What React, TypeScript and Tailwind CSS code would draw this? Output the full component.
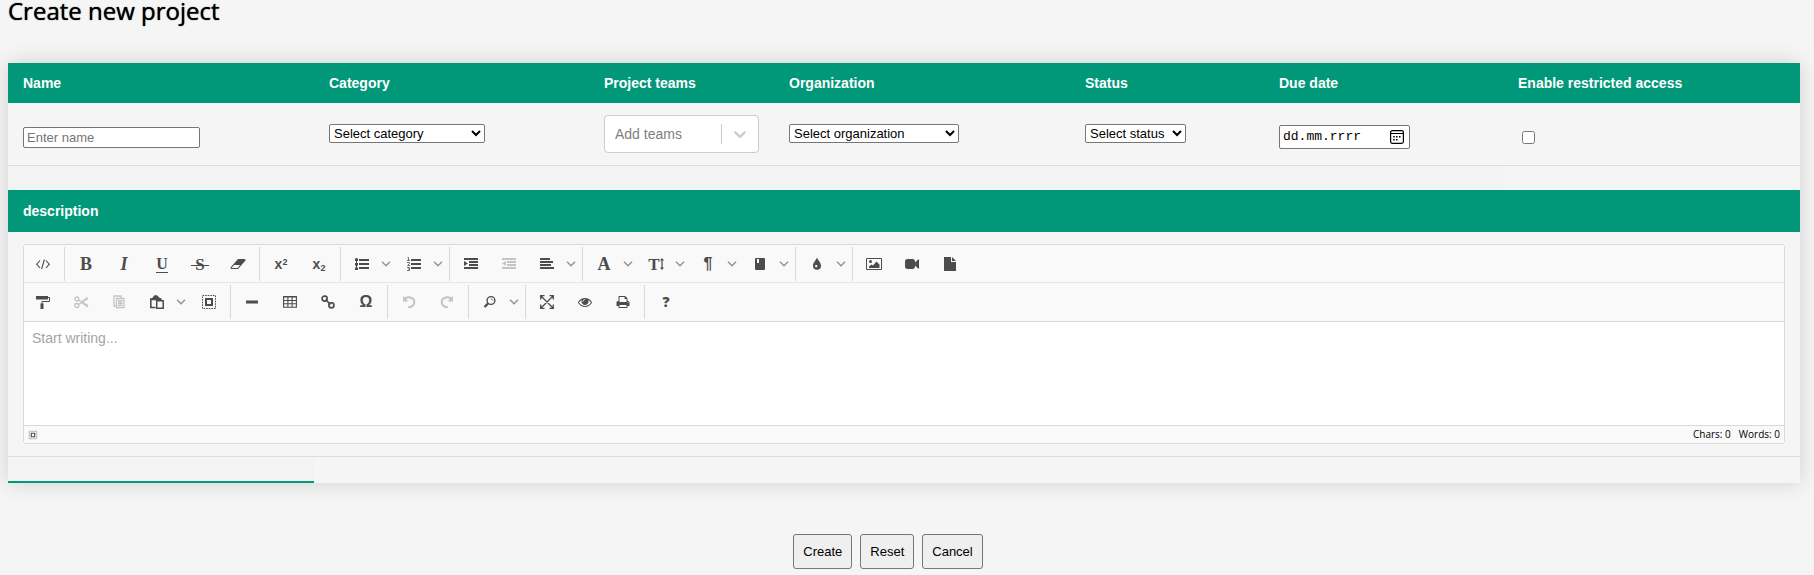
import React from "react";

type IconName =
  | "source" | "eraser" | "ul" | "ol" | "indent" | "outdent" | "align" | "book" | "drop"
  | "image" | "video" | "file" | "brush" | "cut" | "copy" | "paste" | "selectall" | "hr"
  | "table" | "link" | "undo" | "redo" | "search" | "fullsize" | "eye" | "print";

const shapes: Record<IconName, React.ReactNode> = {
  source: (
    <path d="M4 3.5L.7 7.2L4 11M10 3.5l3.300 3.700L10 11M8.400 2.500L5.600 12" fill="none" stroke="currentColor" strokeWidth="1.100" />
  ),
  eraser: (
    <g transform="scale(0.0078125)">
      <path d="M832 1408l336-384h-768l-336 384h768zm1013-1077q15 34 9.5 71.500t-30.500 65.500l-896 1024q-38 44-96 44h-768q-38 0-69.500-20.500t-47.500-54.500q-15-34-9.500-71.500t30.500-65.500l896-1024q38-44 96-44h768q38 0 69.500 20.500t47.500 54.500z" />
    </g>
  ),
  ul: (
    <path d="M0 1.500h3v2.500H0zM0 6h3v2.500H0zM0 10.500h3V13H0zM4 2h10v2H4zM4 6h10v2H4zM4 10h10v2H4zM1 1h1v12H1z" />
  ),
  ol: (
    <>
      <path d="M4 2h10v2H4zM4 6h10v2H4zM4 10h10v2H4z" />
      <path d="M.5.5h1v3M0 3.500h3M0 5.500h2.500v1L.5 8.500H3M0 10.500h2.500v3H0M1 12h1.500" fill="none" stroke="currentColor" strokeWidth=".8" />
    </>
  ),
  indent: <path d="M0 1h14v2H0zM5 4h9v2H5zM5 7h9v2H5zM0 10h14v2H0zM0 4l4 2.500L0 9z" />,
  outdent: <path d="M0 1h14v2H0zM5 4h9v2H5zM5 7h9v2H5zM0 10h14v2H0zM4 4L0 6.500L4 9z" />,
  align: <path d="M0 1h10v2H0zM0 4h13v2H0zM0 7h11v2H0zM0 10h14v2H0z" />,
  book: <path fillRule="evenodd" d="M3 1h8a1 1 0 0 1 1 1v10a1 1 0 0 1-1 1H3a1 1 0 0 1-1-1V2a1 1 0 0 1 1-1zM4 2v4h2V2z" />,
  drop: <path fillRule="evenodd" d="M7 .5c1 3 4 5 4 8.300a4 4 0 0 1-8 0C3 5.500 6 3.500 7 .5zM5.200 8v2.200h2V8z" />,
  image: (
    <>
      <path d="M-.5 1.500h15v11h-15z" fill="none" stroke="currentColor" strokeWidth="1" />
      <circle cx="3.500" cy="4.500" r="1.500" />
      <path d="M2 11V9.500L4.500 7.500L6 8.500L9.500 4.500L12.500 7.500V11z" />
    </>
  ),
  video: (
    <g transform="scale(0.0078125)">
      <path d="M1792 352v1088q0 42-39 59-13 5-25 5-27 0-45-19l-403-403v166q0 119-84.500 203.500t-203.500 84.500h-704q-119 0-203.500-84.500t-84.500-203.500v-704q0-119 84.500-203.500t203.500-84.500h704q119 0 203.500 84.500t84.500 203.500v165l403-402q18-19 45-19 12 0 25 5 39 17 39 59z" />
    </g>
  ),
  file: <path d="M1 0h7v5h5v9H1zM9 0l4 4H9z" />,
  brush: (
    <>
      <path d="M0 1h12v3.500H0z" />
      <path d="M12 2.500h1.500v4H6V9" fill="none" stroke="currentColor" />
      <path d="M4.500 8.500h3V14h-3z" />
    </>
  ),
  cut: (
    <g fill="none" stroke="currentColor" strokeWidth="1.300">
      <circle cx="2.800" cy="4" r="2" />
      <circle cx="2.800" cy="10.500" r="2" />
      <path d="M4.500 5l9.500 5.500M4.500 9.500L14 3.500M7 7l7 5M7 7.500L13.500 2.500" />
    </g>
  ),
  copy: (
    <>
      <path d="M4 11H2V1h7v2" fill="none" stroke="currentColor" strokeWidth="1.300" />
      <path d="M4.500 3.500h7.500v9H4.500z" fill="none" stroke="currentColor" strokeWidth="1.300" />
      <path d="M6 5h4.500v1.700H6zM6 7.200h4.500v1.700H6zM6 9.400h4.500V11H6z" />
    </>
  ),
  paste: (
    <>
      <path d="M5.500 12.500H.8V4h10V5" fill="none" stroke="currentColor" strokeWidth="1.600" />
      <path d="M1 4.500L4.500.3h2.500L10.800 4v1.200H1z" />
      <path d="M6.700 5.700h6.500v7.600H6.700z" fill="none" stroke="currentColor" strokeWidth="1.500" />
    </>
  ),
  selectall: (
    <>
      <path d="M.5.5h13v13H.5z" fill="none" stroke="currentColor" strokeDasharray="1.600 1" />
      <path d="M4 4h6v6H4z" fill="none" stroke="currentColor" strokeWidth="2" />
    </>
  ),
  hr: <path d="M1 5.500h12v3H1z" />,
  table: (
    <path d="M.6 1.500h12.800v10.700H.6zM1 2h12M.6 5.500h12.800M.6 8.800h12.800M4.900 1.500v10.700M9.100 1.500v10.700" fill="none" stroke="currentColor" strokeWidth="1.100" />
  ),
  link: (
    <g fill="none" stroke="currentColor" strokeWidth="1.700">
      <rect x="1.100" y="1.100" width="5" height="5" rx="2.300" />
      <rect x="7.900" y="7.900" width="5" height="5" rx="2.300" />
      <path d="M4.500 4.500l5 5" />
    </g>
  ),
  undo: (
    <>
      <path d="M2 4.200C5 .8 12.300 1.800 12.300 7.200c0 3.600-3.300 5.300-6.300 4.800" fill="none" stroke="currentColor" strokeWidth="2" />
      <path d="M1 1v5.500h5.500z" />
    </>
  ),
  redo: (
    <>
      <path d="M12 4.200C9 .8 1.700 1.800 1.700 7.200c0 3.600 3.300 5.300 6.300 4.800" fill="none" stroke="currentColor" strokeWidth="2" />
      <path d="M13 1v5.500H7.500z" />
    </>
  ),
  search: (
    <>
      <circle cx="8" cy="5.500" r="3.900" fill="none" stroke="currentColor" strokeWidth="1.400" />
      <path d="M5 8.500L1.500 12" stroke="currentColor" strokeWidth="2.400" />
      <path d="M8 3.500l2 2" stroke="currentColor" strokeWidth="1" />
    </>
  ),
  fullsize: (
    <path d="M.7 4.500V.7h3.800M9.500.7h3.800v3.800M13.300 9.500v3.800H9.500M4.500 13.300H.7V9.500M1 1l12 12M13 1L1 13" fill="none" stroke="currentColor" strokeWidth="1.300" />
  ),
  eye: (
    <g transform="scale(0.0078125)">
      <path d="M1664 960q-152-236-381-353 61 104 61 225 0 185-131.500 316.500t-316.500 131.500-316.500-131.500-131.500-316.500q0-121 61-225-229 117-381 353 133 205 333.500 326.500t434.500 121.500 434.500-121.500 333.500-326.500zm-720-384q0-20-14-34t-34-14q-125 0-214.500 89.500t-89.500 214.500q0 20 14 34t34 14 34-14 14-34q0-86 61-147t147-61q20 0 34-14t14-34zm848 384q0 34-20 69-140 230-376.500 368.500t-499.500 138.500-499.500-139-376.500-368q-20-35-20-69t20-69q140-229 376.500-368t499.500-139 499.500 139 376.500 368q20 35 20 69z" />
    </g>
  ),
  print: (
    <g transform="scale(0.0078125)">
      <path d="M448 1536h896v-256h-896v256zm0-640h896v-384h-160q-40 0-68-28t-28-68v-160h-640v640zm1152 64q0-26-19-45t-45-19-45 19-19 45 19 45 45 19 45-19 19-45zm128 0v416q0 13-9.500 22.500t-22.500 9.500h-224v160q0 40-28 68t-68 28h-960q-40 0-68-28t-28-68v-160h-224q-13 0-22.500-9.500t-9.500-22.500v-416q0-79 56.500-135.500t135.500-56.500h64v-544q0-40 28-68t68-28h672q40 0 88 20t76 48l152 152q28 28 48 76t20 88v256h64q79 0 135.500 56.500t56.500 135.500z" />
    </g>
  ),
};

function Icon({ name, className = "size-[14px]" }: { name: IconName; className?: string }) {
  return (
    <svg viewBox="0 0 14 14" className={`${className} overflow-visible`} fill="currentColor" aria-hidden="true">
      {shapes[name]}
    </svg>
  );
}

type Tool = { label: string; icon?: IconName; glyph?: React.ReactNode; menu?: boolean; off?: boolean };

const serif = "font-['Liberation_Serif',serif] leading-none";

const topTools: Tool[][] = [
  [{ label: "Source", icon: "source" }],
  [
    { label: "Bold", glyph: <span className={`${serif} text-[18px] font-bold`}>B</span> },
    { label: "Italic", glyph: <span className={`${serif} text-[18px] font-bold italic`}>I</span> },
    { label: "Underline", glyph: <span className={`${serif} border-b border-current text-[16px] font-bold leading-[13px]`}>U</span> },
    { label: "Strike through", glyph: <span className={`${serif} text-[17px] font-bold line-through decoration-1`}>&nbsp;S&nbsp;</span> },
    { label: "Eraser", icon: "eraser" },
  ],
  [
    { label: "Superscript", glyph: <span className="text-[14px] font-bold leading-none">x<sup className="text-[9px]">2</sup></span> },
    { label: "Subscript", glyph: <span className="text-[14px] font-bold leading-none">x<sub className="text-[9px]">2</sub></span> },
  ],
  [
    { label: "Bulleted list", icon: "ul", menu: true },
    { label: "Numbered list", icon: "ol", menu: true },
  ],
  [
    { label: "Indent", icon: "indent" },
    { label: "Outdent", icon: "outdent", off: true },
    { label: "Align", icon: "align", menu: true },
  ],
  [
    { label: "Font", glyph: <span className={`${serif} text-[18px] font-bold`}>A</span>, menu: true },
    {
      label: "Font size",
      glyph: (
        <span className="flex items-center">
          <span className={`${serif} text-[17px] font-bold`}>T</span>
          <svg viewBox="0 0 4 12" className="h-3 w-1" fill="currentColor" aria-hidden="true">
            <path d="M0 2.500L2 0l2 2.500H2.600v7H4L2 12L0 9.500h1.400v-7z" />
          </svg>
        </span>
      ),
      menu: true,
    },
    { label: "Paragraph", glyph: <span className="text-[16px] font-bold leading-none">¶</span>, menu: true },
    { label: "Class name", icon: "book", menu: true },
  ],
  [{ label: "Color", icon: "drop", menu: true }],
  [
    { label: "Image", icon: "image" },
    { label: "Video", icon: "video" },
    { label: "File", icon: "file" },
  ],
];

const bottomTools: Tool[][] = [
  [
    { label: "Copy format", icon: "brush" },
    { label: "Cut", icon: "cut", off: true },
    { label: "Copy", icon: "copy", off: true },
    { label: "Paste", icon: "paste", menu: true },
    { label: "Select all", icon: "selectall" },
  ],
  [
    { label: "Horizontal line", icon: "hr" },
    { label: "Table", icon: "table" },
    { label: "Link", icon: "link" },
    { label: "Symbol", glyph: <span className="text-[16px] font-bold leading-none">Ω</span> },
  ],
  [
    { label: "Undo", icon: "undo", off: true },
    { label: "Redo", icon: "redo", off: true },
  ],
  [{ label: "Search", icon: "search", menu: true }],
  [
    { label: "Full size", icon: "fullsize" },
    { label: "Preview", icon: "eye" },
    { label: "Print", icon: "print" },
  ],
  [{ label: "About", glyph: <span className="font-['Open_Sans',sans-serif] text-[14px] font-extrabold leading-none">?</span> }],
];

function Toolbar({ groups, className }: { groups: Tool[][]; className: string }) {
  return (
    <div role="toolbar" className={`flex h-[38px] gap-1 overflow-hidden bg-[#f9f9f9] pl-[2px] pt-[2px] text-[#4c4c4c] ${className}`}>
      {groups.map((group, i) => (
        <React.Fragment key={group[0].label}>
          {i > 0 && <span className="h-[34px] w-px shrink-0 bg-[#dadada]" />}
          {group.map((tool) => (
            <span key={tool.label} className="flex h-[34px] shrink-0">
              <button
                type="button"
                aria-label={tool.label}
                disabled={tool.off}
                className="flex w-[34px] items-center justify-center disabled:opacity-30"
              >
                {tool.icon ? <Icon name={tool.icon} /> : tool.glyph}
              </button>
              {tool.menu && (
                <button type="button" aria-label={`${tool.label} options`} className="flex w-[14px] items-center justify-center text-[#949494]">
                  <svg viewBox="0 0 10 6" className="h-[6px] w-[10px]" fill="none" stroke="currentColor" strokeWidth="1.500" aria-hidden="true">
                    <path d="M1 .8l4 4l4-4" />
                  </svg>
                </button>
              )}
            </span>
          ))}
        </React.Fragment>
      ))}
    </div>
  );
}

const columns = [
  { label: "Name", width: "w-[306px]" },
  { label: "Category", width: "w-[275px]" },
  { label: "Project teams", width: "w-[185px]" },
  { label: "Organization", width: "w-[296px]" },
  { label: "Status", width: "w-[194px]" },
  { label: "Due date", width: "w-[239px]" },
  { label: "Enable restricted access", width: "" },
];

const field = "block rounded-[2px] border border-[#767676] bg-white";
const cell = "px-[15px] align-middle";
const selectCell = "px-[15px] pb-px align-middle";
const inputCell = "px-[15px] pt-[6px] align-middle";
const actionButton = "h-[35px] rounded-[3px] border border-[#767676] bg-[#efefef] px-[9px]";

export default function App() {
  return (
    <div className="min-h-screen bg-[#f5f5f5] font-['Liberation_Sans',Arial,sans-serif] text-[13px] text-black">
      <form onSubmit={(e) => e.preventDefault()}>
        <h1 className="h-[63px] px-2 font-['Open_Sans',sans-serif] text-[24px] font-medium leading-[22px] [text-shadow:0_0_1px_#000]">
          Create new project
        </h1>

        <div className="ml-2 mr-[14px] shadow-[0_0_20px_rgba(0,0,0,0.15)]">
          <table className="w-full table-fixed border-separate border-spacing-0 text-left">
            <colgroup>
              {columns.map((c) => (
                <col key={c.label} className={c.width} />
              ))}
            </colgroup>
            <thead>
              <tr className="h-10 bg-[#009879] text-[14px] text-white">
                {columns.map((c) => (
                  <th key={c.label} scope="col" className="px-[15px] font-bold">
                    {c.label}
                  </th>
                ))}
              </tr>
            </thead>
            <tbody>
              <tr className="h-[63px] *:border-b *:border-[#dddddd]">
                <td className={inputCell}>
                  <input type="text" aria-label="Name" placeholder="Enter name" className={`${field} h-[21px] w-[177px] px-[3px] placeholder:text-[#757575]`} />
                </td>
                <td className={selectCell}>
                  <select aria-label="Category" className={`${field} h-[19px] w-[156px]`}>
                    <option>Select category</option>
                  </select>
                </td>
                <td className={cell}>
                  <div className="flex h-[38px] items-center rounded border border-[#cccccc] bg-white">
                    <input
                      type="text"
                      role="combobox"
                      aria-expanded="false"
                      aria-label="Project teams"
                      placeholder="Add teams"
                      className="min-w-0 flex-1 pl-[10px] text-[14px] outline-none placeholder:text-[#808080]"
                    />
                    <span className="h-5 w-px bg-[#cccccc]" />
                    <button type="button" aria-label="Show teams" className="p-2 text-[#cccccc]">
                      <svg viewBox="0 0 20 20" className="size-5" fill="currentColor" aria-hidden="true">
                        <path d="M4.516 7.548c0.436-0.446 1.043-0.481 1.576 0l3.908 3.747 3.908-3.747c0.533-0.481 1.141-0.446 1.574 0 0.436 0.445 0.408 1.197 0 1.615-0.406 0.418-4.695 4.502-4.695 4.502-0.217 0.223-0.502 0.335-0.787 0.335s-0.570-0.112-0.789-0.335c0 0-4.287-4.084-4.695-4.502s-0.436-1.170 0-1.615z" />
                      </svg>
                    </button>
                  </div>
                </td>
                <td className={selectCell}>
                  <select aria-label="Organization" className={`${field} h-[19px] w-[170px]`}>
                    <option>Select organization</option>
                  </select>
                </td>
                <td className={selectCell}>
                  <select aria-label="Status" className={`${field} h-[19px] w-[101px]`}>
                    <option>Select status</option>
                  </select>
                </td>
                <td className={inputCell}>
                  <div className="flex h-6 w-[131px] items-center rounded-[2px] border border-[#767676] bg-white pl-[3px] pr-[5px]">
                    <input
                      type="text"
                      aria-label="Due date"
                      placeholder="dd.mm.rrrr"
                      className="min-w-0 flex-1 font-['Liberation_Mono',monospace] outline-none placeholder:text-black"
                    />
                    <button type="button" aria-label="Show date picker">
                      <svg viewBox="0 0 14 14" className="size-[14px]" aria-hidden="true">
                        <rect x=".6" y=".6" width="12.800" height="12.800" rx="1.800" fill="none" stroke="#000" strokeWidth="1.200" />
                        <path d="M.5 3.500h13" stroke="#000" />
                        <path d="M6 6h1.500v1.500H6zM9 6h1.500v1.500H9zM3.200 6h1.500v1.500H3.200zM3.200 9h1.500v1.500H3.200zM6 9h1.500v1.500H6z" />
                      </svg>
                    </button>
                  </div>
                </td>
                <td className={inputCell}>
                  <input type="checkbox" aria-label="Enable restricted access" className="ml-1 block size-[13px]" />
                </td>
              </tr>
              <tr className="h-6">
                <td colSpan={6} className="bg-[#f3f3f3]" />
                <td />
              </tr>
              <tr className="h-[42px] bg-[#009879] text-[14px] text-white">
                <th colSpan={7} scope="colgroup" className="px-[15px] pt-px font-bold">
                  description
                </th>
              </tr>
              <tr>
                <td colSpan={7} className="border-b border-[#dddddd] px-[15px] py-3">
                  <div className="overflow-hidden rounded-[3px] border border-[#dadada] bg-white">
                    <Toolbar groups={topTools} className="border-b border-[#e6e6e6]" />
                    <Toolbar groups={bottomTools} className="" />
                    <textarea
                      aria-label="Description"
                      placeholder="Start writing..."
                      className="block h-[104px] w-full resize-none border-t border-[#dadada] px-2 py-[6px] text-[14px] leading-5 outline-none placeholder:text-[#a5a5a5]"
                    />
                    <div className="flex h-[18px] items-center gap-2 border-t border-[#dadada] bg-[#f9f9f9] px-1 font-['Open_Sans',sans-serif] text-[10px]">
                      <button type="button" aria-label="Select element" className="mr-auto pl-px text-[#4c4c4c]">
                        <Icon name="selectall" className="size-2" />
                      </button>
                      <span>Chars: 0</span>
                      <span>Words: 0</span>
                    </div>
                  </div>
                </td>
              </tr>
              <tr className="h-[26px]">
                <td className="border-b-2 border-[#009879] bg-[#f3f3f3]" />
                <td colSpan={6} />
              </tr>
            </tbody>
          </table>
        </div>

        <div className="flex justify-center gap-2 pr-[38px] pt-[51px]">
          <button type="submit" className={actionButton}>Create</button>
          <button type="reset" className={actionButton}>Reset</button>
          <button type="button" className={actionButton}>Cancel</button>
        </div>
      </form>
    </div>
  );
}
